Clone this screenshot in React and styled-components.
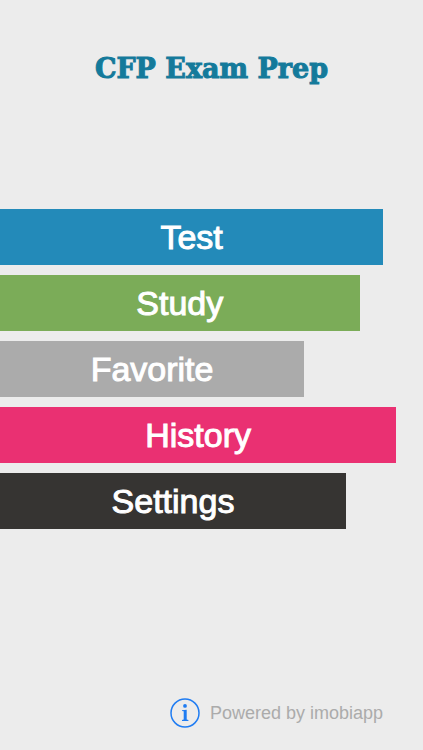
import React from "react";
import styled, { createGlobalStyle } from "styled-components";

const menu = [
  { label: "Test", color: "#238ab9", width: "90.6%" },
  { label: "Study", color: "#7bac58", width: "85%" },
  { label: "Favorite", color: "#ababab", width: "71.9%" },
  { label: "History", color: "#ea3072", width: "93.7%" },
  { label: "Settings", color: "#363432", width: "81.8%" },
];

const App = () => {
  return (
    <>
      <GlobalStyle />
      <Screen>
        <Title>CFP Exam Prep</Title>
        <Menu>
          {menu.map((item) => (
            <MenuButton
              key={item.label}
              type="button"
              $color={item.color}
              $width={item.width}
            >
              {item.label}
            </MenuButton>
          ))}
        </Menu>
        <Footer>
          <InfoButton type="button" aria-label="Info">
            <InfoIcon />
          </InfoButton>
          <Powered>Powered by imobiapp</Powered>
        </Footer>
      </Screen>
    </>
  );
};

const InfoIcon = () => (
  <svg width="30" height="30" viewBox="0 0 30 30" aria-hidden="true">
    <circle cx="15" cy="15" r="14" fill="none" stroke="#1f7cf2" strokeWidth="1.5" />
    <circle cx="15" cy="7.9" r="1.9" fill="#1f7cf2" />
    <path
      d="M12 12.2 L16.7 11.8 V21.6 L18.4 22 V22.9 H12 V22 L13.7 21.6 V13.3 L12 13 Z"
      fill="#1f7cf2"
    />
  </svg>
);

const GlobalStyle = createGlobalStyle`
  * {
    box-sizing: border-box;
  }
  body {
    margin: 0;
    background: #ececec;
    font-family: "Liberation Sans", Arial, sans-serif;
  }
`;

const Screen = styled.main`
  display: flex;
  flex-direction: column;
  min-height: 100vh;
  padding: 49px 0 22px;
`;

const Title = styled.h1`
  margin: 0 0 120px;
  color: #147a9b;
  font-family: "DejaVu Serif", serif;
  font-size: 27px;
  font-weight: bold;
  line-height: 40px;
  text-align: center;
  -webkit-text-stroke: 1px #147a9b;
`;

const Menu = styled.nav`
  display: flex;
  flex-direction: column;
  align-items: flex-start;
  gap: 10px;
`;

const MenuButton = styled.button`
  width: ${({ $width }) => $width};
  height: 56px;
  padding: 0;
  border: none;
  background: ${({ $color }) => $color};
  color: #fff;
  font-family: inherit;
  font-size: 34px;
  line-height: 56px;
  -webkit-text-stroke: 1px #fff;
  cursor: pointer;
`;

const Footer = styled.footer`
  display: flex;
  align-items: center;
  justify-content: flex-end;
  gap: 10px;
  margin-top: auto;
  padding-right: 40px;
`;

const InfoButton = styled.button`
  display: flex;
  padding: 0;
  border: none;
  background: none;
  cursor: pointer;
`;

const Powered = styled.span`
  color: #ababab;
  font-size: 18px;
  line-height: 30px;
`;

export default App;
